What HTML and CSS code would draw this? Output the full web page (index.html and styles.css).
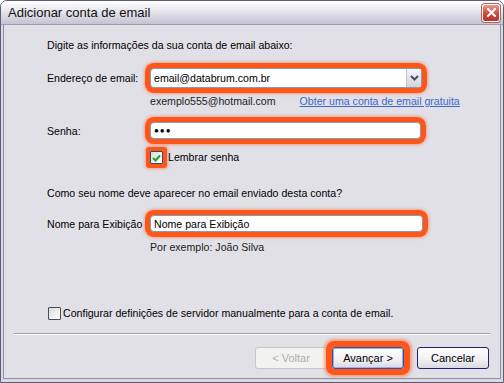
FILE: index.html
```html
<!DOCTYPE html>
<html lang="pt-BR">
<head>
  <meta charset="UTF-8" />
  <title>Adicionar conta de email</title>
  <link rel="stylesheet" href="styles.css">
</head>
<body>

  <div class="window">
    <div class="titlebar">
      <span class="title">Adicionar conta de email</span>
      <span class="close">
        <svg width="9" height="9" viewBox="0 0 9 9"><path d="M1 1 L8 8 M8 1 L1 8" stroke="#fff" stroke-width="2" stroke-linecap="square"/></svg>
      </span>
    </div>

    <div class="main">
      <div class="content">
        <p class="intro">Digite as informações da sua conta de email abaixo:</p>

        <div class="row row-email">
          <label>Endereço de email:</label>
          <div class="combo mark">
            <span class="value">email@databrum.com.br</span>
            <span class="drop">
              <svg width="9" height="6" viewBox="0 0 9 6"><path d="M1 1 L4.5 4.5 L8 1" fill="none" stroke="#4d4d60" stroke-width="2"/></svg>
            </span>
          </div>
        </div>
        <div class="hint">
          <span>exemplo555@hotmail.com</span>
          <a href="#">Obter uma conta de email gratuita</a>
        </div>

        <div class="row row-pass">
          <label>Senha:</label>
          <div class="textbox mark"><span class="dots">●●●</span></div>
        </div>
        <div class="check check-remember">
          <span class="box mark-small">
            <svg width="9" height="8" viewBox="0 0 9 8"><path d="M1 4 L3.5 6.5 L8 1.5" fill="none" stroke="#21a121" stroke-width="2"/></svg>
          </span>
          <span>Lembrar senha</span>
        </div>

        <p class="question">Como seu nome deve aparecer no email enviado desta conta?</p>

        <div class="row row-name">
          <label>Nome para Exibição</label>
          <div class="textbox mark">Nome para Exibição</div>
        </div>
        <div class="hint">Por exemplo: João Silva</div>

        <div class="check check-manual">
          <span class="box"></span>
          <span>Configurar definições de servidor manualmente para a conta de email.</span>
        </div>
      </div>

      <div class="separator"></div>

      <div class="buttons">
        <button class="btn btn-back" disabled>&lt; Voltar</button>
        <button class="btn btn-next mark">Avançar &gt;</button>
        <button class="btn btn-cancel">Cancelar</button>
      </div>
    </div>
  </div>

</body>
</html>
```

FILE: styles.css
```css
* { margin: 0; padding: 0; box-sizing: border-box; }
body { width: 504px; height: 383px; overflow: hidden; font-family: 'Liberation Sans', Arial, sans-serif; font-size: 10.6px; color: #000; background: #fff; }

.window { width: 504px; height: 383px; display: flex; flex-direction: column; border: 1px solid #5e5e72; border-radius: 7px 7px 0 0; background: #d9d9e2; }
.titlebar { height: 24px; display: flex; align-items: center; justify-content: space-between; padding: 0 3px 0 7px; border-radius: 6px 6px 0 0; border-bottom: 1px solid #9c9cae; background: linear-gradient(#ffffff, #f1f1f5 25%, #dcdce6 60%, #c4c4d2 100%); }
.title { font-size: 13px; color: #111; }
.close { width: 18px; height: 18px; display: flex; align-items: center; justify-content: center; border: 1px solid #fff; border-radius: 3px; background: linear-gradient(#e99a8e, #d2483a 55%, #b8342a); box-shadow: 0 0 0 1px #b56060; }

.main { flex: 1; display: flex; flex-direction: column; margin: 0 2px 3px; border: 1px solid #8f8fa2; border-top: none; background: #e0e0e6; }
.content { padding: 14px 0 0 43px; }
.content p, .hint, .check { line-height: 13px; }

.row { display: flex; align-items: center; }
.row label { width: 103px; }
.row-email { margin-top: 16px; }
.row-pass { margin-top: 14px; }
.row-name { margin-top: 15px; }

.combo, .textbox { display: flex; align-items: center; background: #fff; border: 1px solid #7f9db9; }
.combo { width: 272px; height: 20px; padding-left: 3px; justify-content: space-between; }
.combo .drop { width: 15px; height: 18px; display: flex; align-items: center; justify-content: center; background: linear-gradient(#f4f4f8, #d4d4de); border-left: 1px solid #c4c4d0; }
.textbox { width: 271px; height: 17px; padding-left: 3px; }
.row-name .textbox { width: 273px; }
.dots { font-size: 8px; letter-spacing: 1px; }

.mark { border-radius: 4px; box-shadow: 0 0 0 5px #fe5619, 0 0 3px 6px rgba(254, 86, 25, 0.45); }
.mark-small { box-shadow: 0 0 0 4px #fe5619, 0 0 3px 5px rgba(254, 86, 25, 0.45); }

.hint { margin-top: 7px; padding-left: 103px; display: flex; gap: 24px; color: #222; }
.hint a { color: #3d68c8; text-decoration: underline; }
.row-name + .hint { margin-top: 9px; }

.check { display: flex; align-items: center; gap: 3px; }
.check-remember { margin-top: 12px; padding-left: 103px; }
.check-remember span:last-child { margin-left: 2px; }
.check-manual { margin-top: 53px; padding-left: 1px; gap: 2px; }
.box { width: 13px; height: 13px; display: flex; align-items: center; justify-content: center; border: 1px solid #1c5180; background: linear-gradient(135deg, #dcdcd6, #fff); border-radius: 1px; }
.check-manual .box { border-color: #4a4a5e; }

.question { margin-top: 23px; }

.separator { margin: 13px 10px 0; height: 2px; border-top: 1px solid #a0a0ae; border-bottom: 1px solid #fff; }

.buttons { display: flex; justify-content: flex-end; margin-top: 12px; padding-right: 11px; }
.btn { width: 72px; height: 22px; font-family: inherit; font-size: 11px; color: #000; border: 1px solid #23236a; border-radius: 3px; background: linear-gradient(#ffffff, #f0f0f4 60%, #d8d8e2); }
.btn-back { color: #b0b0b0; border-color: #c6c6cc; background: #f2f2f0; }
.btn-next { margin-left: 5px; border-color: #3a4ea0; box-shadow: 0 0 0 1px #9bb0e8 inset, 0 0 0 6px #fe5619, 0 0 3px 8px rgba(254, 86, 25, 0.45); }
.btn-cancel { margin-left: 13px; }
```
